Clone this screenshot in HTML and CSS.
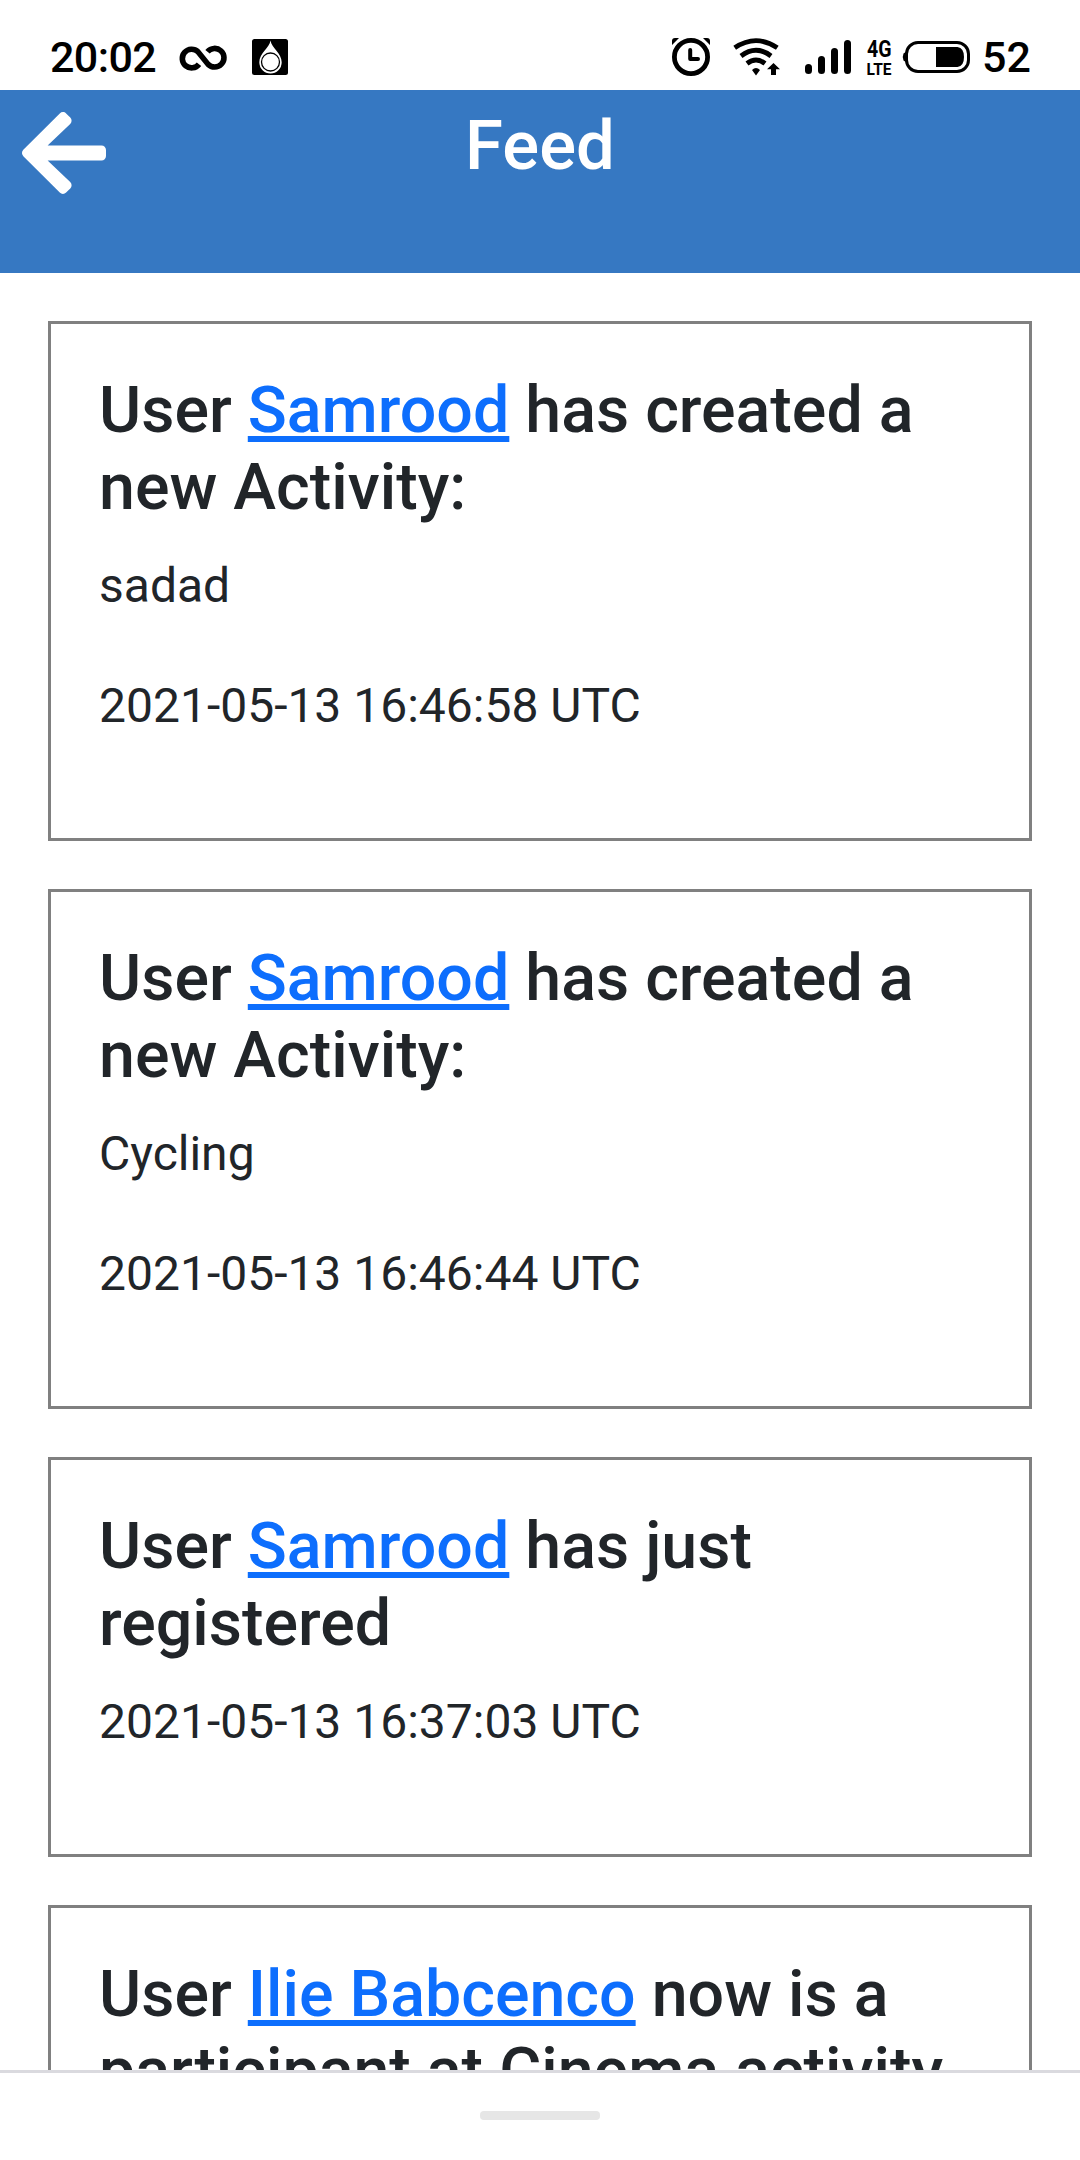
FILE: index.html
```html
<!DOCTYPE html>
<html lang="en">
<head>
<meta charset="utf-8">
<title>Feed</title>
<link rel="stylesheet" href="styles.css">
</head>
<body>
<div class="status">
  <span class="clock">20:02</span>
  <svg class="infinity" width="50" height="90" viewBox="178 0 50 90"><path d="M199 64.200A9.300 9.300 0 1 1 198 51.800L208 64.200A9.300 9.300 0 1 0 207.500 51.800" fill="none" stroke="#000" stroke-width="5.600"/></svg>
  <svg class="drop" width="36" height="90" viewBox="252 0 36 90"><rect x="252" y="39" width="36" height="36" rx="2.500"/><path d="M270.500 40.500C271.500 48 281.700 53 281.700 62.300A11.200 11.200 0 0 1 259.300 62.300C259.300 53 269.500 48 270.500 40.500Z" fill="#fff"/><circle cx="270.500" cy="62" r="9" fill="none" stroke="#000" stroke-width="1.300"/></svg>
  <svg class="alarm" width="40" height="90" viewBox="671 0 40 90"><circle cx="691" cy="57" r="16.600" fill="none" stroke="#000" stroke-width="4.800"/><path d="M690.200 50V59H698" fill="none" stroke="#000" stroke-width="4" stroke-linecap="round" stroke-linejoin="round"/><path d="M672 45V41Q672 38 675 38H679ZM710 45V41Q710 38 707 38H703Z"/></svg>
  <svg class="wifi" width="48" height="90" viewBox="733 0 48 90"><path d="M734.700 47.800Q756 33.500 777.300 47.800M741 56Q756 44.500 771 56M747 63.500Q756 56.500 765 63.500" fill="none" stroke="#000" stroke-width="4.800"/><path d="M752 70Q756 66 760 70L756 75.500ZM773.500 63L780 69.200H776V75H771V69.200H767Z"/></svg>
  <svg class="signal" width="46" height="90" viewBox="805 0 46 90"><rect x="805" y="64" width="7" height="10" rx="3.500"/><rect x="818" y="56" width="7" height="18" rx="3.500"/><rect x="831" y="48" width="7" height="26" rx="3.500"/><rect x="844" y="40" width="7" height="34" rx="3.500"/></svg>
  <svg class="network" width="25" height="90" viewBox="867 0 25 90"><text x="867" y="57.300" font-size="23" textLength="24.500" lengthAdjust="spacingAndGlyphs">4G</text><text x="866.500" y="74.600" font-size="16.500" textLength="25" lengthAdjust="spacingAndGlyphs">LTE</text></svg>
  <svg class="battery" width="68" height="90" viewBox="902 0 68 90"><path d="M906.500 51.500L903.500 53.500Q902 57 903.500 60.500L906.500 62.500Z"/><rect x="906.500" y="42.500" width="62" height="29" rx="11.500" fill="none" stroke="#000" stroke-width="3"/><path d="M936 47H957.500Q964 48 964 57T957.500 67H936Z"/></svg>
  <span class="level">52</span>
</div>
<header class="header">
  <svg class="back" width="84" height="96" viewBox="0 0 448 512"><path fill="#fff" d="M257.500 445.100l-22.200 22.200c-9.400 9.400-24.600 9.400-33.900 0L7 273c-9.400-9.400-9.400-24.600 0-33.900L201.400 44.700c9.400-9.400 24.600-9.400 33.900 0l22.200 22.200c9.500 9.500 9.300 25-.4 34.300L136.600 216H424c13.300 0 24 10.700 24 24v32c0 13.300-10.700 24-24 24H136.600l120.500 114.800c9.800 9.300 10 24.800.4 34.300z"/></svg>
  <h3 class="title">Feed</h3>
</header>
<main class="feed">
  <article class="card">
    <h4>User <a href="#">Samrood</a> has created a new Activity:</h4>
    <p>sadad</p>
    <p>2021-05-13 16:46:58 UTC</p>
  </article>
  <article class="card">
    <h4>User <a href="#">Samrood</a> has created a new Activity:</h4>
    <p>Cycling</p>
    <p>2021-05-13 16:46:44 UTC</p>
  </article>
  <article class="card">
    <h4>User <a href="#">Samrood</a> has just registered</h4>
    <p>2021-05-13 16:37:03 UTC</p>
  </article>
  <article class="card">
    <h4>User <a href="#">Ilie Babcenco</a> now is a participant at Cinema activity</h4>
  </article>
</main>
<footer class="navbar"><div class="handle"></div></footer>
</body>
</html>
```
FILE: styles.css
```css
* { box-sizing: border-box; }

body {
  margin: 0;
  height: 2160px;
  display: flex;
  flex-direction: column;
  overflow: hidden;
  background: #fff;
  color: #212529;
  font-family: Roboto, sans-serif;
  font-size: 48px;
  line-height: 72px;
}

svg { display: block; flex: none; overflow: visible; }

.status {
  flex: none;
  display: flex;
  height: 90px;
  padding-left: 50px;
  color: #000;
  font-size: 43px;
  font-weight: 500;
  line-height: 50px;
}
.clock { width: 128px; padding-top: 32px; letter-spacing: -0.6px; }
.drop { margin-left: 24px; }
.alarm { margin-left: 383px; }
.wifi { margin-left: 22px; }
.signal { margin-left: 24px; }
.network { margin-left: 16px; font-weight: 700; }
.battery { margin-left: 10px; }
.level { margin-left: 12px; padding-top: 32px; }

.header {
  flex: none;
  display: grid;
  grid-template-columns: 84px 1fr 84px;
  align-items: start;
  height: 183px;
  padding: 14px 21.5px 0;
  background: #3678c2;
}
.back { margin-top: 1px; }
.title {
  margin: 0;
  color: #fff;
  font-size: 68.88px;
  font-weight: 500;
  line-height: 83px;
  text-align: center;
}

.feed {
  flex: 1;
  min-height: 0;
  display: flex;
  flex-direction: column;
  gap: 48px;
  padding: 48px 48px 0;
  overflow: hidden;
}
.card {
  flex: none;
  padding: 48px;
  border: 3px solid #808080;
}
.card h4 {
  margin: 0 0 24px;
  font-size: 64.5px;
  font-weight: 500;
  line-height: 77px;
}
.card a {
  color: #0d6efd;
  text-decoration: underline;
  text-decoration-thickness: 6px;
  text-decoration-skip-ink: none;
  text-underline-offset: 4px;
}
.card p { margin: 0 0 48px; }

.navbar {
  flex: none;
  display: flex;
  justify-content: center;
  height: 90px;
  padding-top: 38px;
  border-top: 3px solid #dadadf;
}
.handle {
  width: 120px;
  height: 9px;
  border-radius: 4px;
  background: #e6e6e6;
}
```
